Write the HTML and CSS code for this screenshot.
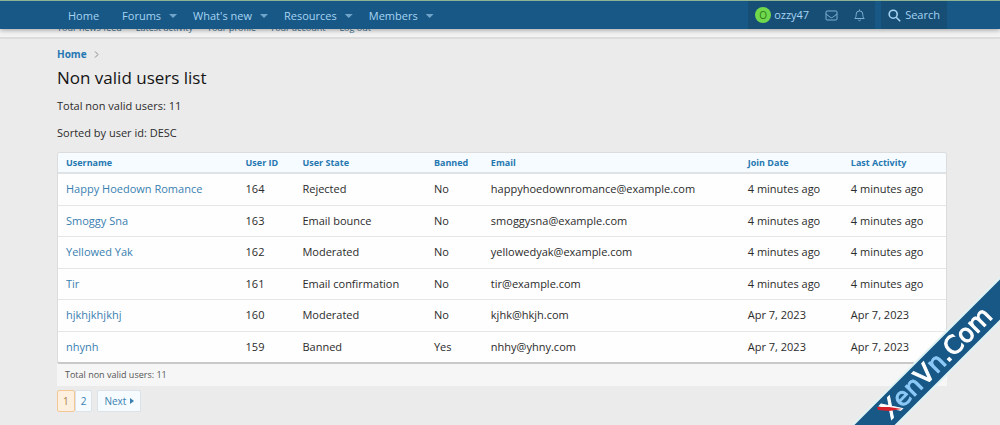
FILE: index.html
```
<!DOCTYPE html>
<html lang="en">
<head>
<meta charset="utf-8">
<title>Non valid users list</title>
<link rel="stylesheet" href="styles.css">
</head>
<body>
<header class="nav">
  <nav class="nav-links">
    <a class="nav-home" href="#">Home</a>
    <a href="#">Forums</a><button class="caret" aria-label="Forums menu"></button>
    <a href="#">What's new</a><button class="caret" aria-label="What's new menu"></button>
    <a href="#">Resources</a><button class="caret" aria-label="Resources menu"></button>
    <a href="#">Members</a><button class="caret" aria-label="Members menu"></button>
  </nav>
  <div class="account">
    <a class="user" href="#"><span class="avatar">O</span>ozzy47</a>
    <a class="icon-link" href="#" aria-label="Inbox"><svg width="13" height="11" viewBox="0 0 13 11" fill="none" stroke="currentColor"><rect x="1" y="1" width="11" height="9" rx="1"/><path d="M1 4 5.300 7.300Q6.500 8.100 7.700 7.300L12 4"/></svg></a>
    <a class="icon-link" href="#" aria-label="Alerts"><svg width="11" height="13" viewBox="0 0 11 13" fill="none" stroke="currentColor" stroke-linejoin="round"><path d="M5.500 .5V2M.8 9.500C2 8.200 2.200 7 2.200 5.200a3.300 3.300 0 0 1 6.600 0C8.800 7 9 8.200 10.200 9.500ZM4.300 11q1.200 1.400 2.400 0"/></svg></a>
  </div>
  <button class="search"><svg width="13" height="13" viewBox="0 0 13 13" fill="none" stroke="currentColor" stroke-width="1.600"><circle cx="5.200" cy="5.200" r="4"/><path d="m8.200 8.200 4 4"/></svg>Search</button>
</header>
<nav class="subnav">
  <a href="#">Your news feed</a><a href="#">Latest activity</a><a href="#">Your profile</a><a href="#">Your account</a><a href="#">Log out</a>
</nav>
<main class="page">
  <nav class="crumbs"><a href="#">Home</a><svg width="5" height="7" viewBox="0 0 5 7" fill="none" stroke="currentColor"><path d="m1 .5 3 3-3 3"/></svg></nav>
  <h1>Non valid users list</h1>
  <p>Total non valid users: 11</p>
  <p>Sorted by user id: DESC</p>
  <div class="panel">
    <table>
      <colgroup><col class="c-name"><col class="c-id"><col class="c-state"><col class="c-ban"><col class="c-mail"><col class="c-date"><col class="c-date"></colgroup>
      <thead><tr><th><a href="#">Username</a></th><th><a href="#">User ID</a></th><th><a href="#">User State</a></th><th><a href="#">Banned</a></th><th><a href="#">Email</a></th><th><a href="#">Join Date</a></th><th><a href="#">Last Activity</a></th></tr></thead>
      <tbody>
        <tr><td><a href="#">Happy Hoedown Romance</a></td><td>164</td><td>Rejected</td><td>No</td><td>happyhoedownromance@example.com</td><td>4 minutes ago</td><td>4 minutes ago</td></tr>
        <tr><td><a href="#">Smoggy Sna</a></td><td>163</td><td>Email bounce</td><td>No</td><td>smoggysna@example.com</td><td>4 minutes ago</td><td>4 minutes ago</td></tr>
        <tr><td><a href="#">Yellowed Yak</a></td><td>162</td><td>Moderated</td><td>No</td><td>yellowedyak@example.com</td><td>4 minutes ago</td><td>4 minutes ago</td></tr>
        <tr><td><a href="#">Tir</a></td><td>161</td><td>Email confirmation</td><td>No</td><td>tir@example.com</td><td>4 minutes ago</td><td>4 minutes ago</td></tr>
        <tr><td><a href="#">hjkhjkhjkhj</a></td><td>160</td><td>Moderated</td><td>No</td><td>kjhk@hkjh.com</td><td>Apr 7, 2023</td><td>Apr 7, 2023</td></tr>
        <tr><td><a href="#">nhynh</a></td><td>159</td><td>Banned</td><td>Yes</td><td>nhhy@yhny.com</td><td>Apr 7, 2023</td><td>Apr 7, 2023</td></tr>
      </tbody>
    </table>
  </div>
  <div class="summary">Total non valid users: 11</div>
  <nav class="pager">
    <div class="pages"><a class="current" href="#">1</a><a href="#">2</a></div>
    <a class="next" href="#">Next<svg width="4" height="6" viewBox="0 0 4 6" fill="currentColor"><path d="M0 0 4 3 0 6Z"/></svg></a>
  </nav>
</main>
<svg class="ribbon" width="150" height="150" viewBox="0 0 150 150">
  <path class="band" d="M2 151 151 2V45L45 151Z"/>
  <text class="brand" transform="translate(41 145) rotate(-45)">X<tspan class="pale">en</tspan>V<tspan class="pale">n</tspan>.Com</text>
  <path class="slash" d="M27 132 39 132 52 134 39 136 28 135Z"/>
</svg>
</body>
</html>
```
FILE: styles.css
```
* { box-sizing: border-box; }
body {
  margin: 0;
  overflow: hidden;
  background: #ebebeb;
  color: #2b2b2b;
  font: 11px/16px "Open Sans", "Noto Sans", sans-serif;
}
a { color: #397fb1; text-decoration: none; }
button { border: 0; padding: 0; background: none; font: inherit; }

.nav {
  position: sticky;
  top: 0;
  z-index: 2;
  display: flex;
  height: 29px;
  padding: 0 53px 0 57px;
  border-top: 1px solid #8db394;
  background: #185886;
  box-shadow: 0 1px 5px rgba(0, 0, 0, .35);
}
.nav a, .search { color: #a6d4f2; }
.nav-links { display: flex; align-items: center; flex: 1; padding: 2px 0 0 11px; }
.nav-home { margin-right: 23px; }
.caret {
  width: 8px;
  height: 4px;
  margin: 0 16px 0 8px;
  background: #6fa5ca;
  clip-path: polygon(0 0, 100% 0, 50% 100%);
}
.account { display: flex; align-items: center; gap: 16px; padding: 0 10px 0 7px; background: #174e75; }
.user { display: flex; align-items: center; gap: 3px; }
.avatar {
  width: 16px;
  height: 16px;
  border-radius: 50%;
  background: #70d84c;
  color: #2c7a16;
  font-size: 10px;
  text-align: center;
}
.icon-link { display: flex; }
.icon-link svg { color: #7fb0d3; }
.search { display: flex; align-items: center; gap: 4px; margin-left: 6px; padding: 0 7px; background: #174e75; }

.subnav {
  display: flex;
  gap: 14px;
  height: 20px;
  margin-top: -10px;
  padding: 0 53px 0 57px;
  border-bottom: 2px solid #dcdcdc;
  background: #f3f3f3;
  font-size: 9px;
  line-height: 18px;
}
.subnav a { color: #3c6d8c; }

.page { padding: 7px 53px 0 57px; }
.crumbs { display: flex; align-items: center; gap: 7px; font-size: 10px; font-weight: 700; color: #888; }
.crumbs a { color: #2577b1; }
h1 { margin: 4px 0 8px; font-size: 17px; font-weight: 400; line-height: 24px; color: #141414; }
p { margin: 0 0 11px; }

.panel {
  overflow: hidden;
  border: 1px solid #dcdcdc;
  border-bottom: 2px solid #c9c9c9;
  border-radius: 3px;
  background: #fefefe;
}
table { width: 100%; table-layout: fixed; border-collapse: collapse; }
.c-name { width: 20.2%; }
.c-id { width: 6.4%; }
.c-state { width: 14.8%; }
.c-ban { width: 6.4%; }
.c-mail { width: 28.9%; }
.c-date { width: 11.6%; }
th, td { padding: 0 8px; text-align: left; white-space: nowrap; }
th { height: 20px; border-bottom: 2px solid #dfe3e5; background: #f5fbfe; font-size: 9px; font-weight: 700; line-height: 18px; }
th a { color: #2577b1; }
td { height: 32px; }
tr:nth-child(even) td { height: 31px; }
tr + tr td { border-top: 1px solid #e6e6e6; }
.summary { padding: 3px 8px; background: #f6f6f6; color: #555; font-size: 9px; }

.pager { display: flex; gap: 5px; padding-top: 4px; font-size: 10px; line-height: 20px; }
.pages { display: flex; }
.pager a { padding: 0 6px; border: 1px solid #dbe3e8; border-radius: 2px; background: #f5fbfe; }
.pager .pages a { padding: 0 5px; }
.pager .current { border-color: #f3c896; background: #fdf0df; color: #a97c49; }
.pager .next { display: flex; align-items: center; gap: 4px; }

.ribbon { position: fixed; right: 0; bottom: 0; z-index: 3; }
.band { fill: #185886; stroke: #dff3f5; stroke-width: 2; }
.brand { fill: #fff; stroke: #fff; stroke-width: 1; font: 400 25px "DejaVu Sans", sans-serif; }
.pale { fill: #8cc9f6; stroke: #8cc9f6; }
.slash { fill: #d5202b; }
```
